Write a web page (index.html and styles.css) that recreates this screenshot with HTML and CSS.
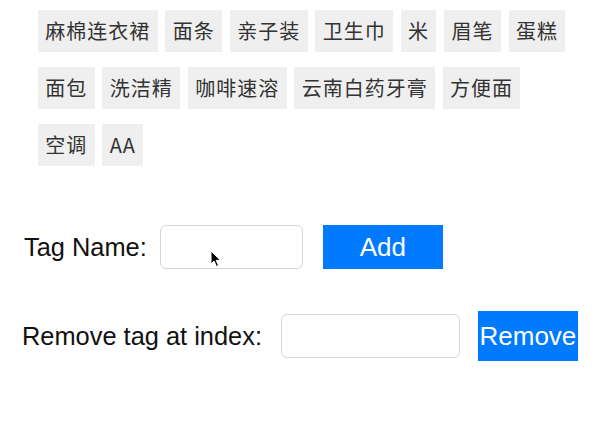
FILE: index.html
```html
<!DOCTYPE html>
<html>
<head>
<meta charset="utf-8">
<link rel="stylesheet" href="styles.css">
</head>
<body>
<div class="page">
  <div class="tags">
    <span class="tag">麻棉连衣裙</span>
    <span class="tag">面条</span>
    <span class="tag">亲子装</span>
    <span class="tag">卫生巾</span>
    <span class="tag">米</span>
    <span class="tag">眉笔</span>
    <span class="tag">蛋糕</span>
    <span class="tag">面包</span>
    <span class="tag">洗洁精</span>
    <span class="tag">咖啡速溶</span>
    <span class="tag">云南白药牙膏</span>
    <span class="tag">方便面</span>
    <span class="tag">空调</span>
    <span class="tag">AA</span>
  </div>
  <div class="row row-add">
    <span class="label">Tag Name:</span>
    <div class="input input-name"></div>
    <div class="btn btn-add">Add</div>
  </div>
  <div class="row row-remove">
    <span class="label">Remove tag at index:</span>
    <div class="input input-index"></div>
    <div class="btn btn-remove">Remove</div>
  </div>
  <svg class="cursor" width="12" height="18" viewBox="0 0 12 18">
    <path d="M1 1 L1 14 L4 11 L6.5 16.5 L8.5 15.6 L6.2 10.3 L10.5 10.3 Z" fill="#000" stroke="#fff" stroke-width="1"/>
  </svg>
</div>
</body>
</html>
```

FILE: styles.css
```css
html, body {
  margin: 0;
  padding: 0;
  background: #fff;
}
.page {
  position: relative;
  width: 611px;
  height: 442px;
  font-family: "Liberation Sans", Arial, sans-serif;
}
.tags {
  display: flex;
  flex-wrap: wrap;
  gap: 15px 7.75px;
  padding: 10px 40px 0 38px;
}
.tag {
  display: block;
  height: 42px;
  line-height: 42px;
  padding: 0 7.35px;
  background: #efefef;
  color: #333;
  font-family: "Noto Sans CJK SC", "Liberation Sans", sans-serif;
  font-size: 20px;
  letter-spacing: 1px;
}
.row {
  display: flex;
  align-items: center;
}
.label {
  font-size: 25.4px;
  color: #111;
}
.row-add {
  margin-top: 59px;
  padding-left: 24px;
  height: 44px;
}
.row-remove {
  margin-top: 42px;
  padding-left: 22px;
  height: 50px;
}
.input {
  height: 42px;
  border: 1px solid #d6d6d6;
  border-radius: 6px;
  background: #fff;
  box-sizing: content-box;
}
.input-name {
  width: 141px;
  margin-left: 13px;
}
.input-index {
  width: 177px;
  margin-left: 19px;
}
.btn {
  background: #007aff;
  color: #fff;
  font-size: 26px;
  display: flex;
  align-items: center;
  justify-content: center;
  white-space: nowrap;
}
.btn-add {
  width: 120px;
  height: 44px;
  margin-left: 20px;
}
.btn-remove {
  width: 100px;
  height: 50px;
  margin-left: 18px;
  overflow: visible;
}
.cursor {
  position: absolute;
  left: 210px;
  top: 250px;
}
```
